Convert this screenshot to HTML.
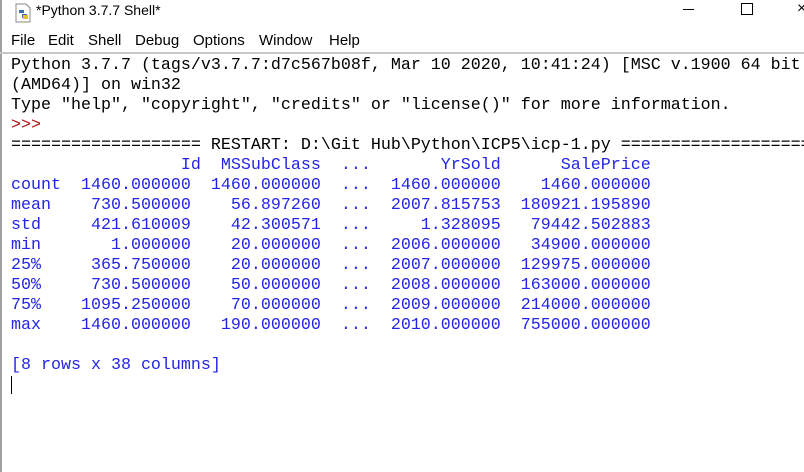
<!DOCTYPE html>
<html><head><style>
html,body{margin:0;padding:0;width:804px;height:472px;overflow:hidden;background:#fff;position:relative;font-family:"Liberation Sans",sans-serif}
.title{position:absolute;left:36px;top:2px;font-size:14px;color:#000}
.menu span{position:absolute;top:32px;font-size:15px;color:#000}
.sep{position:absolute;left:0;top:52px;width:804px;height:2px;background:#c8c8c8}
.lb{position:absolute;left:0;top:0;width:2px;height:472px;background:#a0a0a0}
pre{position:absolute;left:11px;top:56px;margin:0;font-family:"Liberation Mono",monospace;font-size:16.67px;line-height:20px;color:#000;white-space:pre;overflow:hidden;width:793px}
.b{color:#2424e8}.r{color:#b01010}
</style></head><body>
<div class="lb"></div>
<svg style="position:absolute;left:14px;top:3px" width="18" height="20" viewBox="0 0 18 20"><path d="M2 1h10l4 4v14H2z" fill="#fff" stroke="#888"/><path d="M5 7h5v3H5zM8 11h5v4H8z" fill="#3d6fb5"/><path d="M9 12h5v4H9z" fill="#e0c030"/></svg>
<div class="title">*Python 3.7.7 Shell*</div>
<div style="position:absolute;left:683px;top:9px;width:11px;height:1px;background:#000"></div>
<div style="position:absolute;left:741px;top:3px;width:10px;height:10px;border:1px solid #000"></div>
<div style="position:absolute;left:797px;top:0px;font-size:16px">×</div>
<div class="menu"><span style="left:11px">File</span><span style="left:48px">Edit</span><span style="left:88px">Shell</span><span style="left:135px">Debug</span><span style="left:193px">Options</span><span style="left:259px">Window</span><span style="left:329px">Help</span></div>
<div class="sep"></div>
<pre>Python 3.7.7 (tags/v3.7.7:d7c567b08f, Mar 10 2020, 10:41:24) [MSC v.1900 64 bit
(AMD64)] on win32
Type "help", "copyright", "credits" or "license()" for more information.
<span class="r">&gt;&gt;&gt; </span>
=================== RESTART: D:\Git Hub\Python\ICP5\icp-1.py ====================
<span class="b">                 Id  MSSubClass  ...       YrSold      SalePrice
count  1460.000000  1460.000000  ...  1460.000000    1460.000000
mean    730.500000    56.897260  ...  2007.815753  180921.195890
std     421.610009    42.300571  ...     1.328095   79442.502883
min       1.000000    20.000000  ...  2006.000000   34900.000000
25%     365.750000    20.000000  ...  2007.000000  129975.000000
50%     730.500000    50.000000  ...  2008.000000  163000.000000
75%    1095.250000    70.000000  ...  2009.000000  214000.000000
max    1460.000000   190.000000  ...  2010.000000  755000.000000

[8 rows x 38 columns]</span>
</pre>
<div style="position:absolute;left:11px;top:376px;width:1px;height:18px;background:#000"></div>
</body></html>
